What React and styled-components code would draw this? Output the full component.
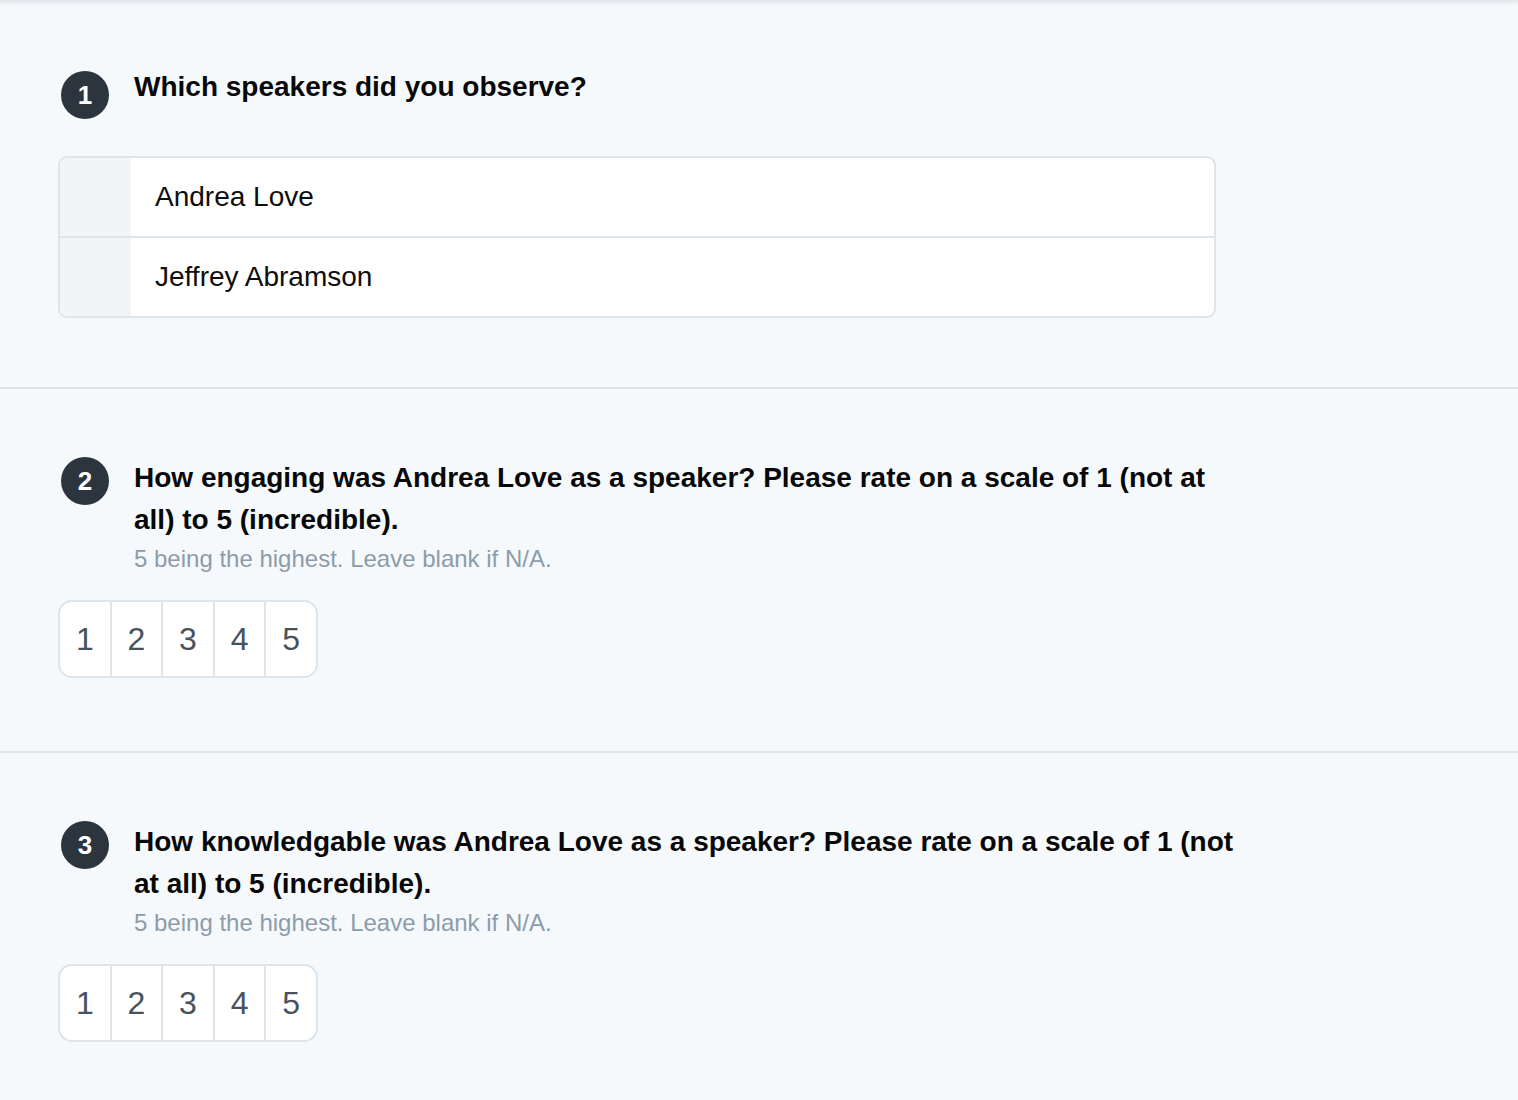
import styled, { createGlobalStyle } from "styled-components";

const GlobalStyle = createGlobalStyle`
  body {
    margin: 0;
    background: #f5f9fc;
    font-family: "Liberation Sans", Arial, sans-serif;
    color: #0b0b0b;
  }
`;

const questions = [
  {
    id: 2,
    title:
      "How engaging was Andrea Love as a speaker? Please rate on a scale of 1 (not at all) to 5 (incredible).",
  },
  {
    id: 3,
    title:
      "How knowledgable was Andrea Love as a speaker? Please rate on a scale of 1 (not at all) to 5 (incredible).",
  },
];

const speakers = ["Andrea Love", "Jeffrey Abramson"];

function App() {
  return (
    <Page>
      <GlobalStyle />
      <TopEdge />
      <Section>
        <Header>
          <Badge $shift={5}>1</Badge>
          <TitleBlock>
            <Title>Which speakers did you observe?</Title>
          </TitleBlock>
        </Header>
        <SpeakerList>
          {speakers.map((name) => (
            <SpeakerRow key={name}>
              <CheckCell />
              <SpeakerName>{name}</SpeakerName>
            </SpeakerRow>
          ))}
        </SpeakerList>
      </Section>
      {questions.map((q) => (
        <Section key={q.id}>
          <Header>
            <Badge>{q.id}</Badge>
            <TitleBlock>
              <Title>{q.title}</Title>
              <Hint>5 being the highest. Leave blank if N/A.</Hint>
            </TitleBlock>
          </Header>
          <Scale>
            {[1, 2, 3, 4, 5].map((n) => (
              <ScaleCell key={n}>{n}</ScaleCell>
            ))}
          </Scale>
        </Section>
      ))}
    </Page>
  );
}

const Page = styled.div`
  min-height: 1100px;
  background: #f5f9fc;
`;

const TopEdge = styled.div`
  height: 2px;
  background: #e3e8ec;
  box-shadow: 0 1px 3px rgba(40, 60, 80, 0.12);
`;

const Section = styled.section`
  padding: 68px 0 73px 58px;
  border-bottom: 2px solid #dde5eb;

  &:first-of-type {
    padding-top: 64px;
    padding-bottom: 69px;
  }

  &:last-child {
    border-bottom: none;
  }
`;

const Header = styled.div`
  display: flex;
  align-items: flex-start;
  gap: 25px;
  padding-left: 3px;
`;

const Badge = styled.div`
  flex: none;
  width: 48px;
  height: 48px;
  margin-top: ${(p) => p.$shift || 0}px;
  border-radius: 50%;
  background: #2c353e;
  color: #fff;
  font-size: 26px;
  font-weight: 700;
  display: flex;
  align-items: center;
  justify-content: center;
`;

const TitleBlock = styled.div`
  width: 1110px;
`;

const Title = styled.h2`
  margin: 0;
  font-size: 28px;
  font-weight: 700;
  line-height: 42px;
  color: #080808;
`;

const Hint = styled.div`
  font-size: 24px;
  line-height: 32px;
  color: #8d9ca8;
  margin-top: 2px;
`;

const SpeakerList = styled.div`
  margin-top: 37px;
  width: 1154px;
  border: 2px solid #dde5eb;
  border-radius: 9px;
  overflow: hidden;
  background: #fff;
`;

const SpeakerRow = styled.div`
  display: flex;
  height: 78px;

  & + & {
    border-top: 2px solid #dde5eb;
  }
`;

const CheckCell = styled.div`
  width: 71px;
  background: #f2f5f8;
`;

const SpeakerName = styled.div`
  display: flex;
  align-items: center;
  padding-left: 24px;
  font-size: 28px;
  color: #0d0d0d;
`;

const Scale = styled.div`
  display: inline-flex;
  margin-top: 25px;
  border: 2px solid #dde5eb;
  border-radius: 14px;
  overflow: hidden;
  background: #fff;
`;

const ScaleCell = styled.div`
  width: 49.6px;
  height: 74px;
  display: flex;
  align-items: center;
  justify-content: center;
  font-size: 32px;
  color: #46525c;

  & + & {
    border-left: 2px solid #dde5eb;
  }
`;

export default App;
